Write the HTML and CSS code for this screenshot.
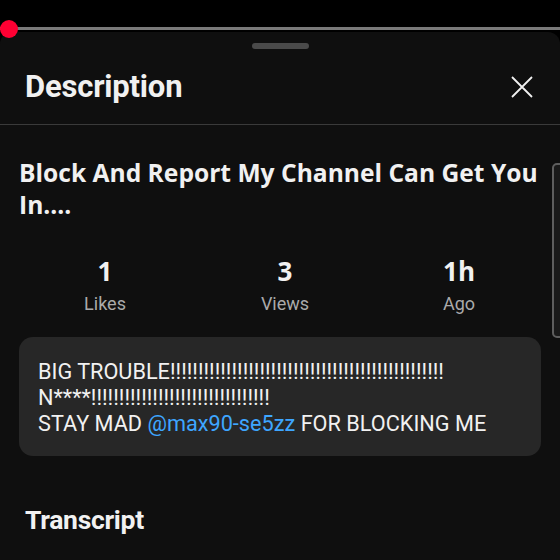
FILE: index.html
```html
<!DOCTYPE html>
<html lang="en">
<head>
    <meta charset="UTF-8">
    <meta name="viewport" content="width=device-width, initial-scale=1.0">
    <title>Description</title>
    <link rel="stylesheet" href="styles.css">
</head>
<body>
    <div class="player">
        <div class="progress"></div>
        <div class="progress-dot"></div>
    </div>

    <div class="sheet">
        <div class="handle"></div>
        <header class="sheet-header">
            <h1>Description</h1>
            <button class="close-btn" aria-label="Close">
                <svg width="22" height="22" viewBox="0 0 22 22">
                    <path d="M1 1L21 21M21 1L1 21" stroke="#f1f1f1" stroke-width="1.8" fill="none"/>
                </svg>
            </button>
        </header>

        <main class="sheet-body">
            <div class="scrollbar"></div>
            <h2 class="video-title">Block And Report My Channel Can Get You In....</h2>

            <div class="stats">
                <div class="stat">
                    <span class="stat-value">1</span>
                    <span class="stat-label">Likes</span>
                </div>
                <div class="stat">
                    <span class="stat-value">3</span>
                    <span class="stat-label">Views</span>
                </div>
                <div class="stat">
                    <span class="stat-value">1h</span>
                    <span class="stat-label">Ago</span>
                </div>
            </div>

            <div class="desc-box">
                <p>BIG TROUBLE!!!!!!!!!!!!!!!!!!!!!!!!!!!!!!!!!!!!!!!!!!!!!!!!!</p>
                <p>N****!!!!!!!!!!!!!!!!!!!!!!!!!!!!!!!!</p>
                <p>STAY MAD <a href="#">@max90-se5zz</a> FOR BLOCKING ME</p>
            </div>

            <h2 class="section-title">Transcript</h2>
        </main>
    </div>
</body>
</html>
```

FILE: styles.css
```css
html, body {
    margin: 0;
    padding: 0;
}

body {
    width: 560px;
    height: 560px;
    overflow: hidden;
    background: #000;
    font-family: Roboto, "Liberation Sans", sans-serif;
    color: #f1f1f1;
}

.player {
    position: relative;
    height: 32px;
}

.progress {
    position: absolute;
    left: 0;
    right: 0;
    top: 27px;
    height: 3px;
    background: #7a7a7a;
}

.progress-dot {
    position: absolute;
    left: 0;
    top: 20px;
    width: 18px;
    height: 18px;
    border-radius: 50%;
    background: #ff0033;
}

.sheet {
    background: #0f0f0f;
    border-radius: 12px 12px 0 0;
    height: 528px;
    padding-top: 11px;
    box-sizing: border-box;
}

.handle {
    width: 57px;
    height: 6px;
    margin: 0 auto;
    border-radius: 3px;
    background: #4a4a4a;
}

.sheet-header {
    display: flex;
    align-items: center;
    justify-content: space-between;
    height: 75px;
    padding: 0 27px 0 25px;
    border-bottom: 1px solid #3a3a3a;
}

.sheet-header h1 {
    margin: 0;
    font-size: 31px;
    font-weight: 700;
    letter-spacing: -0.2px;
    line-height: 36px;
}

.close-btn {
    background: none;
    border: none;
    padding: 0;
    width: 22px;
    height: 22px;
    cursor: pointer;
}

.close-btn svg {
    display: block;
}

.sheet-body {
    position: relative;
    padding: 32px 19px 0;
}

.scrollbar {
    position: absolute;
    right: -4px;
    top: 38px;
    width: 8px;
    height: 171px;
    border: 2px solid #5e5e5e;
    border-radius: 5px;
    background: #1a1a1a;
}

.video-title {
    margin: 0;
    font-family: "Open Sans", "Noto Sans", sans-serif;
    font-size: 24.6px;
    font-weight: 700;
    line-height: 32px;
}

.stats {
    display: grid;
    grid-template-columns: repeat(3, 1fr);
    margin-top: 35px;
}

.stat {
    display: flex;
    flex-direction: column;
    align-items: center;
}

.stat:first-child {
    margin-left: -2px;
}

.stat:nth-child(2),
.stat:last-child {
    margin-left: 10px;
}

.stat-value {
    font-family: "Open Sans", "Noto Sans", sans-serif;
    font-size: 26px;
    font-weight: 700;
    line-height: 30px;
}

.stat-label {
    margin-top: 6px;
    font-size: 18px;
    color: #aaa;
    line-height: 24px;
}

.desc-box {
    margin-top: 21px;
    background: #272727;
    border-radius: 14px;
    padding: 22px 18px 19px 19px;
    font-size: 21.7px;
    line-height: 26px;
}

.desc-box p {
    margin: 0;
    white-space: nowrap;
}

.desc-box a {
    color: #3ea6ff;
    text-decoration: none;
}

.section-title {
    margin: 48px 0 0 6px;
    font-size: 26.5px;
    font-weight: 700;
    line-height: 32px;
    letter-spacing: -0.3px;
}
```
